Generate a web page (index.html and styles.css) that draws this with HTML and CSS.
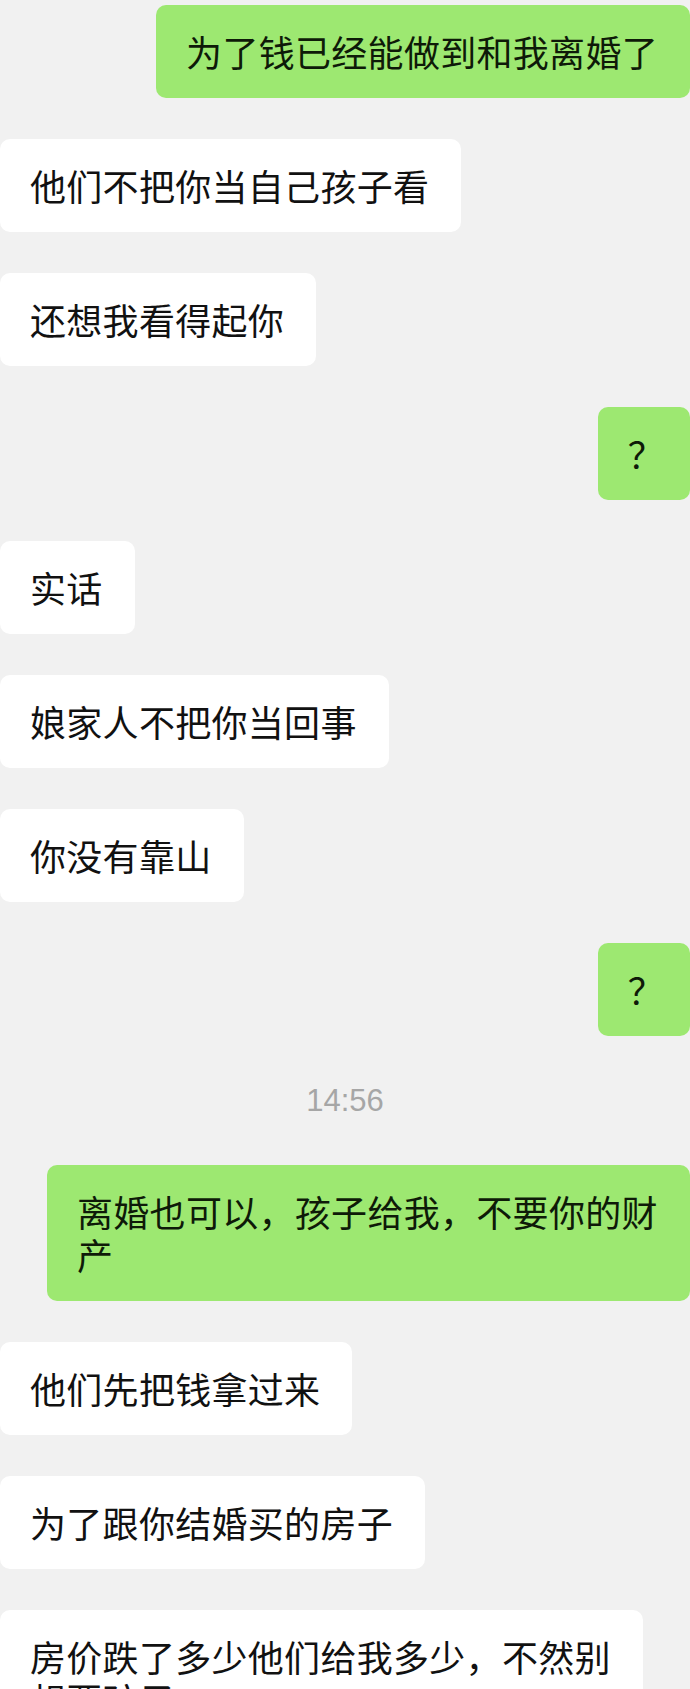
FILE: index.html
```html
<!DOCTYPE html>
<html lang="zh-CN">
<head>
  <meta charset="UTF-8">
  <meta name="viewport" content="width=device-width, initial-scale=1.0">
  <title>聊天记录</title>
  <link rel="stylesheet" href="styles.css">
</head>
<body>

  <div class="chat">
    <div class="msg me"><div class="bubble">为了钱已经能做到和我离婚了</div></div>
    <div class="msg"><div class="bubble">他们不把你当自己孩子看</div></div>
    <div class="msg"><div class="bubble">还想我看得起你</div></div>
    <div class="msg me"><div class="bubble short">？</div></div>
    <div class="msg"><div class="bubble">实话</div></div>
    <div class="msg"><div class="bubble">娘家人不把你当回事</div></div>
    <div class="msg"><div class="bubble">你没有靠山</div></div>
    <div class="msg me"><div class="bubble short">？</div></div>

    <div class="time">14:56</div>

    <div class="msg me"><div class="bubble">离婚也可以，孩子给我，不要你的财产</div></div>
    <div class="msg"><div class="bubble">他们先把钱拿过来</div></div>
    <div class="msg"><div class="bubble">为了跟你结婚买的房子</div></div>
    <div class="msg"><div class="bubble">房价跌了多少他们给我多少，不然别想要孩子</div></div>
  </div>

</body>
</html>
```

FILE: styles.css
```css
body {
  font-family: "Noto Sans CJK SC", "Noto Sans", sans-serif;
  background-color: #f1f1f1;
  color: #111;
  margin: 0;
  padding: 0;
}
.chat {
  display: flex;
  flex-direction: column;
  gap: 41px;
  padding-top: 5px;
}
.msg {
  display: flex;
  justify-content: flex-start;
}
.msg.me {
  justify-content: flex-end;
}
.bubble {
  background-color: #fff;
  font-size: 36px;
  line-height: 43px;
  letter-spacing: 0.3px;
  padding: 25px 32px 25px 30px;
  border-radius: 10px;
  max-width: 581px;
}
.bubble.short {
  padding-right: 26px;
}
.msg.me .bubble {
  background-color: #9de871;
  color: #0e1a08;
}
.time {
  font-family: "Liberation Sans", Arial, sans-serif;
  font-size: 31px;
  line-height: 47px;
  color: #a6a6a6;
  text-align: center;
}
```
